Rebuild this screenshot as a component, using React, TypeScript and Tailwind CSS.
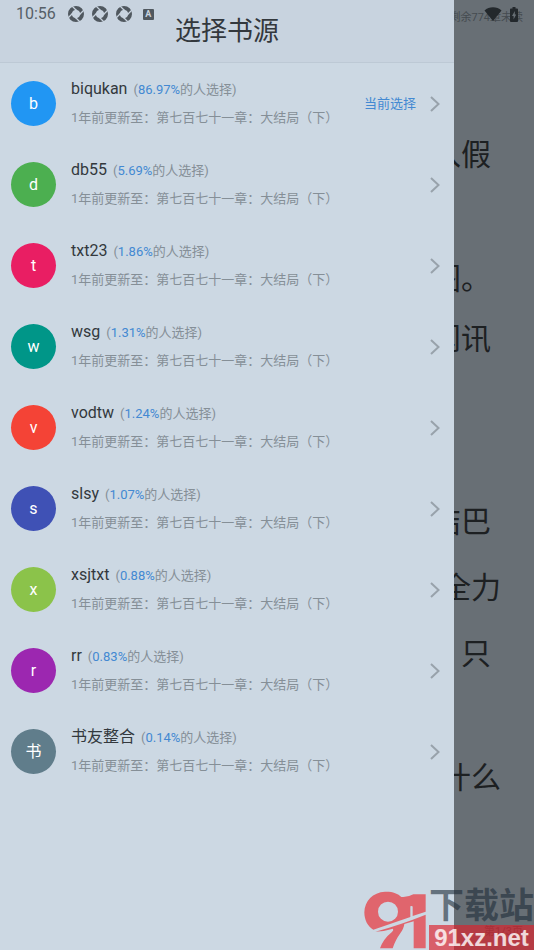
const sources = [
  { name: 'biqukan', letter: 'b', percent: '86.97%', color: 'bg-[#2196f3]', current: true },
  { name: 'db55', letter: 'd', percent: '5.69%', color: 'bg-[#4caf50]' },
  { name: 'txt23', letter: 't', percent: '1.86%', color: 'bg-[#e91e63]' },
  { name: 'wsg', letter: 'w', percent: '1.31%', color: 'bg-[#009688]' },
  { name: 'vodtw', letter: 'v', percent: '1.24%', color: 'bg-[#f44336]' },
  { name: 'slsy', letter: 's', percent: '1.07%', color: 'bg-[#3f51b5]' },
  { name: 'xsjtxt', letter: 'x', percent: '0.88%', color: 'bg-[#8bc34a]' },
  { name: 'rr', letter: 'r', percent: '0.83%', color: 'bg-[#9c27b0]' },
  { name: '书友整合', letter: '书', percent: '0.14%', color: 'bg-[#607d8b]' },
]

const lines = [
  { text: '入假', className: 'mt-[114px] mr-2.5' },
  { text: '图。', className: 'mt-[94px] mr-2.5' },
  { text: '闻讯', className: 'mt-[30px] mr-2.5' },
  { text: '结巴', className: 'mt-[153px] mr-2.5' },
  { text: '全力', className: 'mt-9' },
  { text: '，只', className: 'mt-9 mr-2.5' },
  { text: '什么', className: 'mt-[94px]' },
]

function ShutterIcon() {
  return (
    <svg viewBox="0 0 16 16" className="size-4" fill="none" aria-hidden="true">
      <circle cx="8" cy="8" r="6" stroke="#50585f" strokeWidth="4" />
      <path d="M8 3.2L12.8 8L8 12.8L3.2 8Z" fill="#c8d3df" />
      <path d="M4 0L8.500 4.5M16 4L11.500 8.500M12 16L7.500 11.500M0 12L4.500 7.500" stroke="#c8d3df" strokeWidth="1.3" />
    </svg>
  )
}

function StatusBar() {
  return (
    <div className="absolute inset-x-0 top-0 z-10 flex h-7 items-center pr-4 pl-4 text-[#565f67]">
      <span className="text-base">10:56</span>
      <div className="ml-3 flex items-center gap-2">
        <ShutterIcon />
        <ShutterIcon />
        <ShutterIcon />
      </div>
      <span className="ml-[11px] flex size-[11px] items-center justify-center rounded-[1px] bg-[#50585f] text-[9px] leading-none font-bold text-[#c8d3df]">
        A
      </span>
      <svg viewBox="0 0 18 14" className="mr-2 ml-auto h-3.5 w-[18px]" fill="#23282c" aria-hidden="true">
        <path d="M9 14L0.5 3.4C2.8 1.3 5.8 0.2 9 0.2S15.2 1.3 17.5 3.4Z" />
      </svg>
      <svg viewBox="0 0 8 15" className="h-[15px] w-2" aria-hidden="true">
        <path d="M2.5 0h3v1.5H7a1 1 0 0 1 1 1V14a1 1 0 0 1-1 1H1a1 1 0 0 1-1-1V2.5a1 1 0 0 1 1-1h1.5Z" fill="#23282c" />
        <path d="M4.8 4L2 9h1.6v3.5L6.2 7.5H4.8Z" fill="#686f75" />
      </svg>
    </div>
  )
}

function Chevron() {
  return (
    <svg viewBox="0 0 10 16" className="ml-[14px] h-4 w-2.5 shrink-0" fill="none" stroke="#98a2ab" strokeWidth="2" aria-hidden="true">
      <path d="M1 1L8.5 8L1 15" />
    </svg>
  )
}

function Watermark() {
  return (
    <div className="pointer-events-none absolute right-0 bottom-0 z-20 flex items-end">
      <svg viewBox="0 0 225 195" className="-mr-1.5 h-[65px] w-[75px]" fill="#e0656d" aria-hidden="true">
        <path
          fillRule="evenodd"
          d="M40 134C22 124 13 104 13 82C14 48 38 22 75 20C96 19 114 25 124 36Q142 38 160 28H197V80L158 93V66Q158 61 151 64V96L40 134ZM84 50A30 30 0 1 0 84 110A30 30 0 1 0 84 50Z"
        />
        <path d="M46 140Q120 120 197 89V190H161V109L133 117Q132 130 119 148Q107 164 98 190H60Q70 162 95 142Q102 136 99 131Q74 139 46 140Z" />
      </svg>
      <div className="flex w-[105px] flex-col">
        <span className="h-9 text-[35px] leading-9 font-bold whitespace-nowrap text-[#1e2d3a]/60">下载站</span>
        <span className="h-[25px] bg-[#df1f29]/65 text-center font-['Liberation_Sans',sans-serif] text-2xl leading-[25px] font-bold text-white/80">
          91xz.net
        </span>
      </div>
    </div>
  )
}

export default function App() {
  return (
    <div className="relative flex min-h-screen overflow-hidden bg-[#686f75] font-['Roboto','Noto_Sans_CJK_SC',sans-serif]">
      <StatusBar />

      <section className="w-[85%] shrink-0 bg-[#ccd8e3]">
        <header className="flex h-[63px] items-center justify-center border-b border-[#bdc9d5] bg-[#c8d3df]">
          <h1 className="text-[26px] leading-none text-[#33383d]">选择书源</h1>
        </header>
        <ul>
          {sources.map((s) => (
            <li key={s.name}>
              <button type="button" className="flex h-[81px] w-full items-center pr-3.5 pl-[11px] text-left">
                <span className={`flex size-[45px] shrink-0 items-center justify-center rounded-full text-base text-white ${s.color}`}>
                  {s.letter}
                </span>
                <span className="ml-[15px] flex flex-1 flex-col gap-1">
                  <span className="flex items-baseline gap-1.5 leading-6">
                    <span className="text-base leading-6 text-[#33383d]">{s.name}</span>
                    <span className="text-[13px] text-[#858f97]">
                      (<span className="text-[#4389d2]">{s.percent}</span>的人选择)
                    </span>
                  </span>
                  <span className="text-[13px] leading-6 text-[#858f97]">1年前更新至：第七百七十一章：大结局（下）</span>
                </span>
                {s.current && <span className="text-[13px] text-[#4389d2]">当前选择</span>}
                <Chevron />
              </button>
            </li>
          ))}
        </ul>
      </section>

      <main className="flex min-w-0 flex-1 flex-col items-end overflow-hidden pr-[33px] whitespace-nowrap text-[#1d2022]">
        <p className="-mr-[22px] pt-2.5 text-[11px] leading-4 text-[#454b50]">剩余774章未读</p>
        {lines.map((line) => (
          <p key={line.text} className={`text-[30px] leading-[30px] ${line.className}`}>
            {line.text}
          </p>
        ))}
        <p className="mt-auto -mr-[22px] pb-2.5 text-[11px] leading-4 text-[#454b50]">第1/3页</p>
      </main>

      <Watermark />
    </div>
  )
}
